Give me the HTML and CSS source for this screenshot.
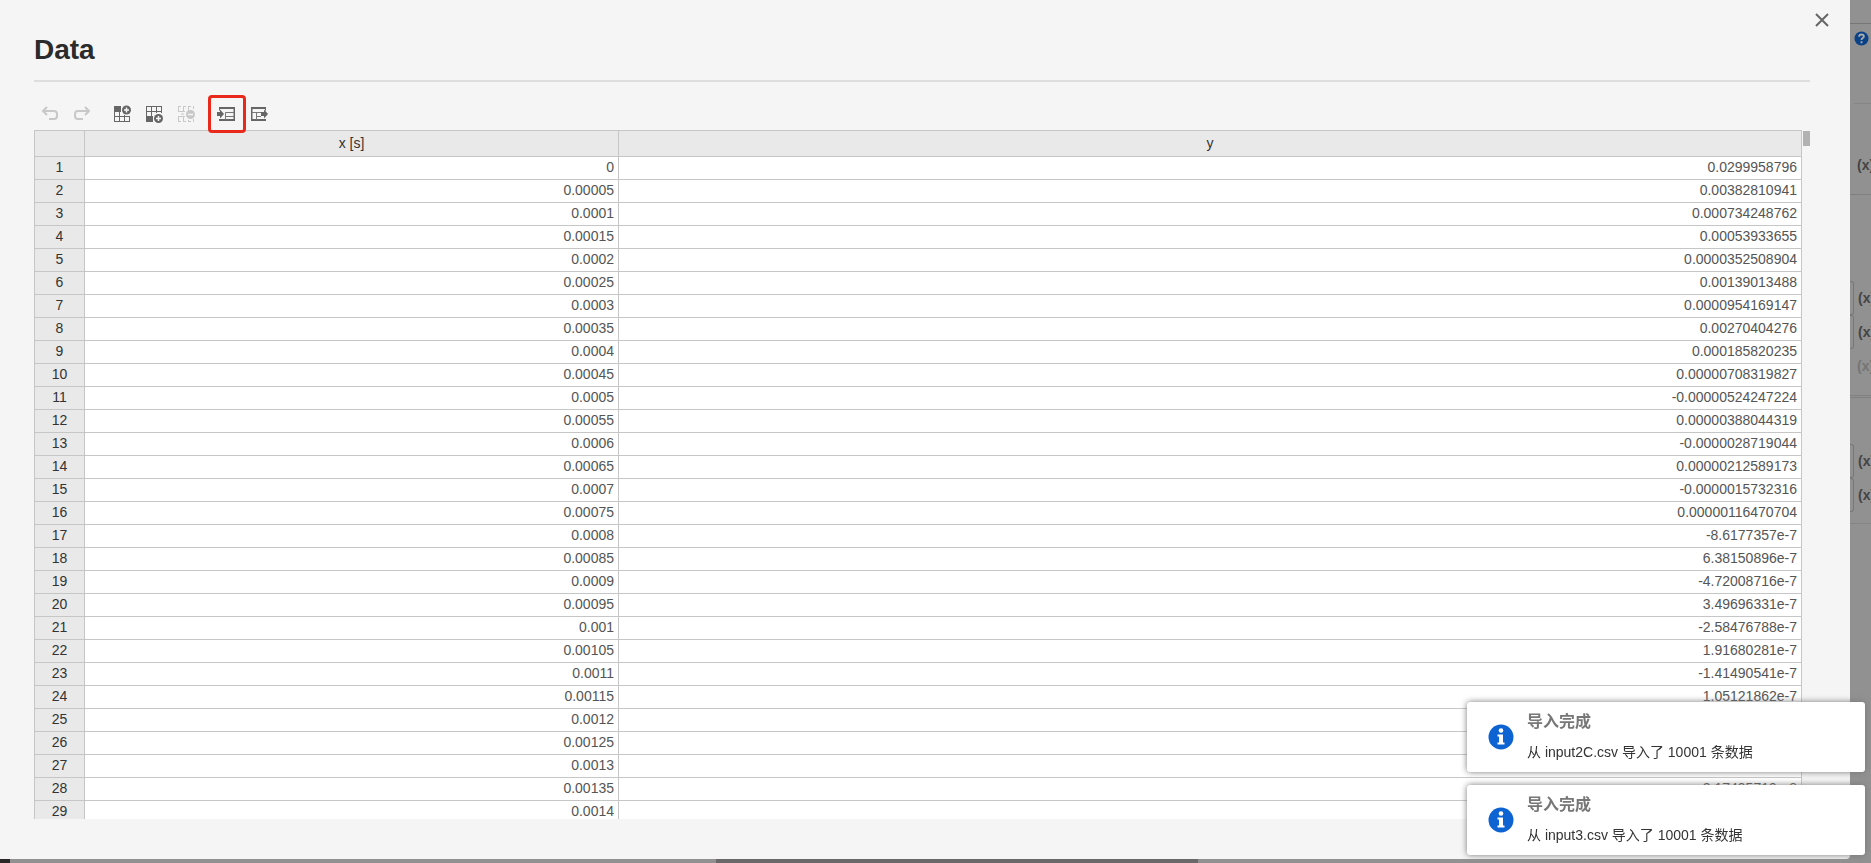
FILE: index.html
```html
<!DOCTYPE html>
<html lang="zh-CN">
<head>
<meta charset="utf-8">
<title>Data</title>
<link rel="stylesheet" href="styles.css">
</head>
<body>
<main class="stage">
  <section class="dialog" role="dialog" aria-labelledby="dialog-title">
    <button class="close" type="button" aria-label="Close"><svg width="14" height="14" viewBox="0 0 14 14"><path d="M1 1L13 13M13 1L1 13" fill="none" stroke="#666" stroke-width="2"/></svg></button>
    <h1 class="title" id="dialog-title">Data</h1>
    <div class="toolbar">
      <button class="tool" type="button" aria-label="Undo" disabled><svg width="20" height="20" viewBox="0 0 20 20" fill="none" stroke="#c8c8c8" stroke-width="2"><path d="M7 3L3 7L7 11M3 7H14Q17 7 17 10V12Q17 15 14 15H9"/></svg></button>
      <button class="tool" type="button" aria-label="Redo" disabled><svg width="20" height="20" viewBox="0 0 20 20" fill="none" stroke="#c8c8c8" stroke-width="2"><path d="M13 3L17 7L13 11M17 7H6Q3 7 3 10V12Q3 15 6 15H11"/></svg></button>
      <button class="tool tool-group" type="button" aria-label="Insert row above"><svg width="20" height="20" viewBox="0 0 20 20"><path d="M2 2H9V7H2Z" fill="#666"/><path d="M2 7.500H9M2 12.500H18M2 17.500H18M2.500 7V18M7.500 7V18M12.500 11V18M17.500 12V18" fill="none" stroke="#666"/><circle cx="14.500" cy="6" r="4.500" fill="#666"/><path d="M12 6H17M14.500 3.500V8.500" stroke="#f5f5f5" stroke-width="1.500"/></svg></button>
      <button class="tool" type="button" aria-label="Insert row below"><svg width="20" height="20" viewBox="0 0 20 20"><path d="M2 12H9V18H2Z" fill="#666"/><path d="M2 2.500H18M2 7.500H18M2 12.500H9M2.500 2V12M7.500 2V12M12.500 2V9M17.500 2V9" fill="none" stroke="#666"/><circle cx="14.500" cy="14.500" r="4.500" fill="#666"/><path d="M12 14.500H17M14.500 12V17" stroke="#f5f5f5" stroke-width="1.500"/></svg></button>
      <button class="tool" type="button" aria-label="Delete row" disabled><svg width="20" height="20" viewBox="0 0 20 20"><path d="M2.500 2V8M7.500 2V8M12.500 2V7M17.500 2V5M2 2.500H5M7 2.500H10M12 2.500H15M17 2.500H18M2 7.500H9M2 12.500H9M2.500 12V18M7.500 12V18M12.500 16V18M17.500 15V18M2 17.500H5M7 17.500H10M12 17.500H15M17 17.500H18" fill="none" stroke="#c8c8c8"/><path d="M5 10H8" stroke="#c8c8c8"/><circle cx="14.500" cy="10.500" r="4.500" fill="#c8c8c8"/><path d="M12 10.500H17" stroke="#f5f5f5" stroke-width="1.500"/></svg></button>
      <button class="tool tool-marked" type="button" aria-label="Import"><svg width="20" height="20" viewBox="0 0 20 20"><path d="M2 3H18V17H2V15H16.500V5H3V6.500H2Z" fill="#666"/><path d="M8.500 16V8.500H17M8.500 12.500H17" fill="none" stroke="#777"/><path d="M0 8H3V5.500L7 10L3 14.500V12H0Z" fill="#666"/></svg></button>
      <button class="tool" type="button" aria-label="Export"><svg width="20" height="20" viewBox="0 0 20 20"><path d="M16 3H1V17H16V15H2.500V5H15V6.500H16Z" fill="#666"/><path d="M2 8.500H11M6.500 8V16M6.500 12.500H11" fill="none" stroke="#777"/><path d="M11 8H14V5.500L18 10L14 14.500V12H11Z" fill="#666"/></svg></button>
    </div>
    <div class="sheet">
      <table class="grid">
        <colgroup><col class="col-index"><col class="col-x"><col></colgroup>
        <thead><tr><th></th><th>x [s]</th><th>y</th></tr></thead>
        <tbody>
          <tr><th>1</th><td>0</td><td>0.0299958796</td></tr>
          <tr><th>2</th><td>0.00005</td><td>0.00382810941</td></tr>
          <tr><th>3</th><td>0.0001</td><td>0.000734248762</td></tr>
          <tr><th>4</th><td>0.00015</td><td>0.00053933655</td></tr>
          <tr><th>5</th><td>0.0002</td><td>0.0000352508904</td></tr>
          <tr><th>6</th><td>0.00025</td><td>0.00139013488</td></tr>
          <tr><th>7</th><td>0.0003</td><td>0.0000954169147</td></tr>
          <tr><th>8</th><td>0.00035</td><td>0.00270404276</td></tr>
          <tr><th>9</th><td>0.0004</td><td>0.000185820235</td></tr>
          <tr><th>10</th><td>0.00045</td><td>0.00000708319827</td></tr>
          <tr><th>11</th><td>0.0005</td><td>-0.00000524247224</td></tr>
          <tr><th>12</th><td>0.00055</td><td>0.00000388044319</td></tr>
          <tr><th>13</th><td>0.0006</td><td>-0.0000028719044</td></tr>
          <tr><th>14</th><td>0.00065</td><td>0.00000212589173</td></tr>
          <tr><th>15</th><td>0.0007</td><td>-0.0000015732316</td></tr>
          <tr><th>16</th><td>0.00075</td><td>0.00000116470704</td></tr>
          <tr><th>17</th><td>0.0008</td><td>-8.6177357e-7</td></tr>
          <tr><th>18</th><td>0.00085</td><td>6.38150896e-7</td></tr>
          <tr><th>19</th><td>0.0009</td><td>-4.72008716e-7</td></tr>
          <tr><th>20</th><td>0.00095</td><td>3.49696331e-7</td></tr>
          <tr><th>21</th><td>0.001</td><td>-2.58476788e-7</td></tr>
          <tr><th>22</th><td>0.00105</td><td>1.91680281e-7</td></tr>
          <tr><th>23</th><td>0.0011</td><td>-1.41490541e-7</td></tr>
          <tr><th>24</th><td>0.00115</td><td>1.05121862e-7</td></tr>
          <tr><th>25</th><td>0.0012</td><td></td></tr>
          <tr><th>26</th><td>0.00125</td><td></td></tr>
          <tr><th>27</th><td>0.0013</td><td></td></tr>
          <tr><th>28</th><td>0.00135</td><td>3.17495719e-8</td></tr>
          <tr><th>29</th><td>0.0014</td><td></td></tr>
        </tbody>
      </table>
      <div class="scrollbar"><div class="thumb"></div></div>
    </div>
  </section>
  <aside class="side">
    <div class="side-top"></div>
    <div class="side-help"><svg width="15" height="15" viewBox="0 0 16 16"><circle cx="8" cy="8" r="7.500" fill="#0b4287"/><path d="M5.500 6Q5.500 3.700 8 3.700Q10.500 3.700 10.500 5.800Q10.500 7 9 7.700Q8 8.200 8 9.500M8 11V13" fill="none" stroke="#aaa" stroke-width="2"/></svg></div>
    <div class="side-block"><span class="var">(x)</span></div>
    <div class="side-list">
      <span class="var boxed">(x)</span>
      <span class="var boxed">(x)</span>
      <span class="var faded">(x)</span>
    </div>
    <div class="side-list side-last">
      <span class="var boxed">(x)</span>
      <span class="var boxed">(x)</span>
    </div>
  </aside>
  <div class="dock"><div class="dock-start"></div><div class="dock-track"></div></div>
</main>
<div class="toasts">
  <article class="toast">
    <svg class="info" width="26" height="26" viewBox="0 0 26 26"><circle cx="13" cy="13" r="12.500" fill="#0d63d1"/><circle cx="13" cy="6.500" r="2.300" fill="#fff"/><path d="M9.500 10.500H15V18.500H16.500V20.500H9.500V18.500H11V12.500H9.500Z" fill="#fff"/></svg>
    <div><h2 class="toast-title">导入完成</h2><p class="toast-text">从 input2C.csv 导入了 10001 条数据</p></div>
  </article>
  <article class="toast">
    <svg class="info" width="26" height="26" viewBox="0 0 26 26"><circle cx="13" cy="13" r="12.500" fill="#0d63d1"/><circle cx="13" cy="6.500" r="2.300" fill="#fff"/><path d="M9.500 10.500H15V18.500H16.500V20.500H9.500V18.500H11V12.500H9.500Z" fill="#fff"/></svg>
    <div><h2 class="toast-title">导入完成</h2><p class="toast-text">从 input3.csv 导入了 10001 条数据</p></div>
  </article>
</div>
</body>
</html>
```
FILE: styles.css
```css
* { box-sizing: border-box; }

body {
  margin: 0;
  overflow: hidden;
  font: 14px/22px "Liberation Sans", Arial, "Noto Sans CJK SC", sans-serif;
  color: #333;
}

button {
  padding: 0;
  border: 0;
  background: none;
}

.stage {
  display: grid;
  grid-template: minmax(0, 1fr) 4px / minmax(0, 1fr) 21px;
  height: 100vh;
  background: #919191;
}

.dialog {
  position: relative;
  display: flex;
  flex-direction: column;
  padding: 33px 40px 40px 34px;
  background: #f5f5f5;
  border-bottom-right-radius: 4px;
}

.close {
  position: absolute;
  top: 13px;
  right: 21px;
  height: 14px;
}

.close svg,
.tool svg { display: block; }

.title {
  margin: 0;
  padding-bottom: 13px;
  border-bottom: 2px solid #dedede;
  font-size: 28px;
  line-height: 34px;
  color: #2b2b2b;
}

.toolbar {
  position: relative;
  z-index: 1;
  display: flex;
  align-items: center;
  gap: 12px;
  height: 48px;
  padding: 16px 6px 0;
}

.tool-group { margin-left: 8px; }

.tool-marked {
  display: grid;
  place-items: center;
  width: 38px;
  height: 38px;
  margin: 0 -8px 0 0;
  border: 3px solid #e8291c;
  border-radius: 4px;
}

.sheet {
  display: flex;
  flex: 1;
  min-height: 0;
  overflow: hidden;
}

.grid {
  flex: 1;
  table-layout: fixed;
  border-collapse: collapse;
  height: max-content;
  background: #fff;
}

.col-index { width: 50px; }
.col-x { width: 534px; }

.grid th,
.grid td {
  height: 23px;
  padding: 0 4px 2px;
  border: 1px solid #c6c6c6;
  font-weight: normal;
  line-height: 20px;
}

.grid th {
  background: #e9e9e9;
  color: #333;
}

.grid thead th { height: 26px; }

.grid td {
  text-align: right;
  color: #555;
}

.scrollbar {
  width: 8px;
  padding: 1px 0 0 1px;
}

.thumb {
  height: 15px;
  background: #b2b2b2;
}

.side {
  overflow: hidden;
  color: #444;
}

.side-top {
  height: 24px;
  border-bottom: 1px solid #777;
}

.side-help {
  height: 80px;
  margin-left: 4px;
  padding-top: 7px;
  border-bottom: 1px solid #858585;
}

.side-help svg { display: block; }

.side-block {
  height: 91px;
  padding-top: 46px;
  border-bottom: 1px solid #808080;
}

.side-list {
  display: flex;
  flex-direction: column;
  gap: 2px;
  height: 203px;
  padding-top: 87px;
  border-bottom: 3px double #808080;
}

.side-last {
  height: 126px;
  padding-top: 47px;
  border-bottom: 1px solid #858585;
}

.var {
  display: flex;
  align-items: center;
  height: 32px;
  font-weight: bold;
}

.var::before {
  content: "";
  flex: none;
  width: 3px;
  height: 32px;
  margin-right: 4px;
}

.side-block .var { height: 30px; }
.boxed::before {
  border: 1px solid #777;
  border-left: 0;
  border-radius: 0 3px 3px 0;
}

.faded { color: #757575; }

.dock {
  grid-column: 1 / -1;
  display: flex;
}

.dock-start {
  width: 10px;
  margin-right: 706px;
  background: #2b2727;
}

.dock-track {
  width: 482px;
  background: #6a6868;
}

.toasts {
  position: fixed;
  right: 6px;
  bottom: 8px;
  display: grid;
  gap: 13px;
  width: 398px;
}

.toast {
  display: flex;
  gap: 13px;
  height: 70px;
  padding: 9px 21px;
  border-radius: 3px;
  background: #fff;
  box-shadow: 0 0 6px #777;
}

.info { margin-top: 13px; }

.toast-title {
  margin: 0 0 9px;
  font-size: 16px;
  font-weight: bold;
  line-height: 22px;
  color: #777;
}

.toast-text {
  margin: 0;
  line-height: 20px;
}
```
